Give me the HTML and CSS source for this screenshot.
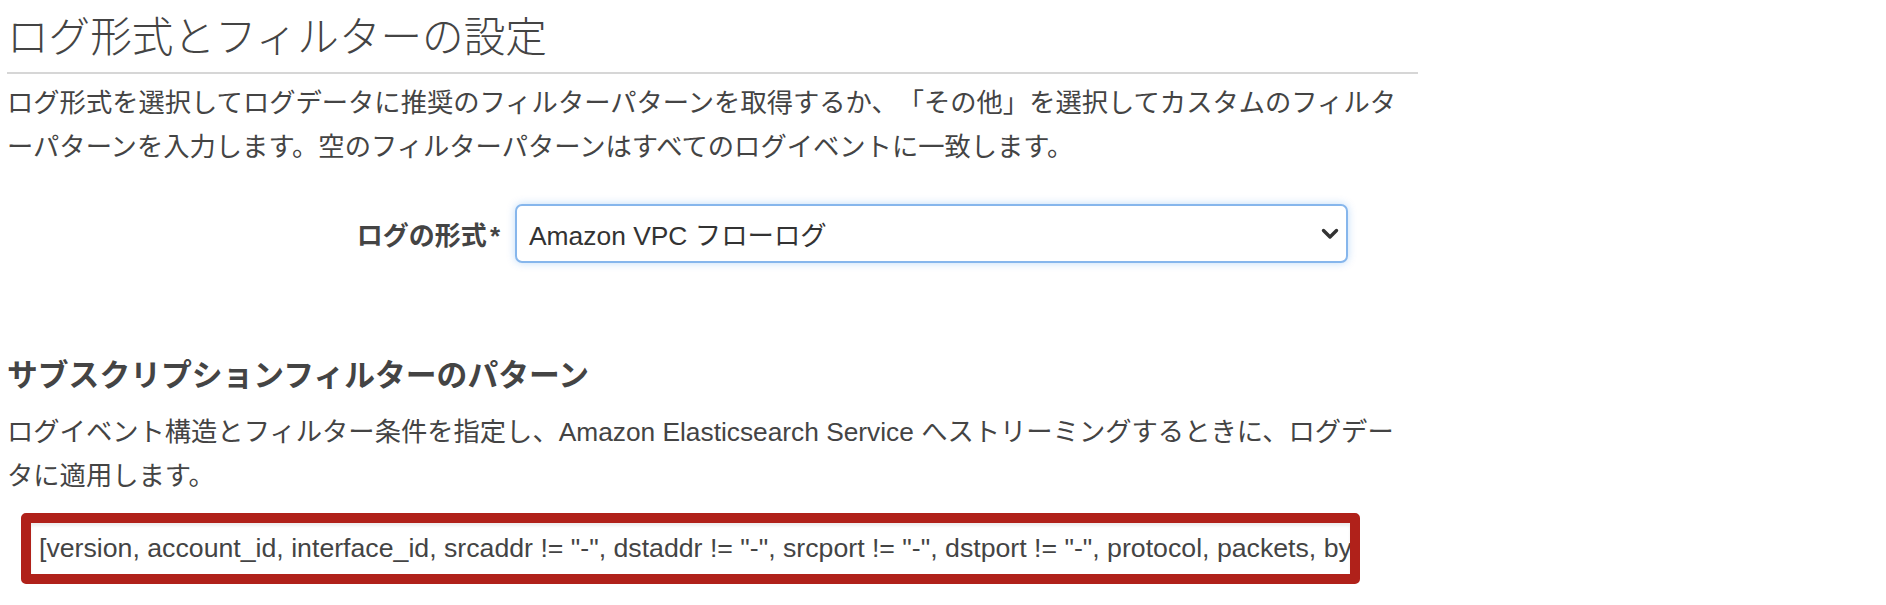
FILE: index.html
```html
<!DOCTYPE html>
<html lang="ja">
<head>
  <meta charset="UTF-8" />
  <meta name="viewport" content="width=device-width, initial-scale=1.0" />
  <title>ログ形式とフィルターの設定</title>
  <link rel="stylesheet" href="styles.css">
</head>
<body>

  <div class="page">
    <h1>ログ形式とフィルターの設定</h1>
    <p class="intro">ログ形式を選択してログデータに推奨のフィルターパターンを取得するか、「その他」を選択してカスタムのフィルターパターンを入力します。空のフィルターパターンはすべてのログイベントに一致します。</p>

    <div class="form-row">
      <label class="field-label">ログの形式<span class="req">*</span></label>
      <div class="select">
        <span>Amazon VPC フローログ</span>
        <svg width="18" height="12" viewBox="0 0 18 12">
          <polyline points="2.5,2.5 9,9 15.5,2.5" fill="none" stroke="#333" stroke-width="3.4" stroke-linecap="round" stroke-linejoin="round" />
        </svg>
      </div>
    </div>

    <h2>サブスクリプションフィルターのパターン</h2>
    <p class="intro">ログイベント構造とフィルター条件を指定し、Amazon Elasticsearch Service へストリーミングするときに、ログデータに適用します。</p>

    <div class="pattern">
      <div class="pattern-text">[version, account_id, interface_id, srcaddr != "-", dstaddr != "-", srcport != "-", dstport != "-", protocol, packets, bytes, start, end, action, log_status]</div>
    </div>
  </div>

</body>
</html>
```

FILE: styles.css
```css
body {
  font-family: "Liberation Sans", "Noto Sans CJK JP", sans-serif;
  background: #fff;
  color: #444;
  margin: 0;
  text-spacing-trim: space-all;
}
.page {
  width: 1411px;
  padding-left: 7px;
}
h1 {
  margin: 0;
  padding: 12px 0 8px;
  font-size: 41.6px;
  line-height: 52px;
  font-weight: 300;
  color: #444;
  border-bottom: 2px solid #d6d6d6;
}
.intro {
  margin: 7px 0 0;
  font-size: 26.3px;
  line-height: 44px;
}
.form-row {
  display: flex;
  align-items: center;
  gap: 15px;
  margin-top: 35px;
}
.field-label {
  width: 493px;
  text-align: right;
  font-size: 26px;
  font-weight: bold;
}
.req {
  margin-left: 3px;
}
.select {
  width: 833px;
  height: 59px;
  box-sizing: border-box;
  border: 2px solid #86b6ec;
  border-radius: 7px;
  box-shadow: 0 0 8px rgba(0, 115, 230, 0.25);
  background: white;
  display: flex;
  align-items: center;
  justify-content: space-between;
  padding: 0 7px 0 12px;
  font-size: 26.4px;
  color: #333;
}
h2 {
  margin: 93px 0 0;
  font-size: 30.8px;
  line-height: 40px;
  font-weight: bold;
  color: #444;
}
h2 + .intro {
  margin-top: 14px;
}
.pattern {
  margin: 15px 0 0 14px;
  width: 1339px;
  height: 71px;
  box-sizing: border-box;
  border: 10px solid #b0211a;
  border-radius: 5px;
  background: white;
  box-shadow: inset 0 3px 3px rgba(0, 0, 0, 0.07);
  overflow: hidden;
  display: flex;
  align-items: center;
  padding-left: 8px;
}
.pattern-text {
  white-space: nowrap;
  font-size: 26.7px;
  color: #444;
}
```
